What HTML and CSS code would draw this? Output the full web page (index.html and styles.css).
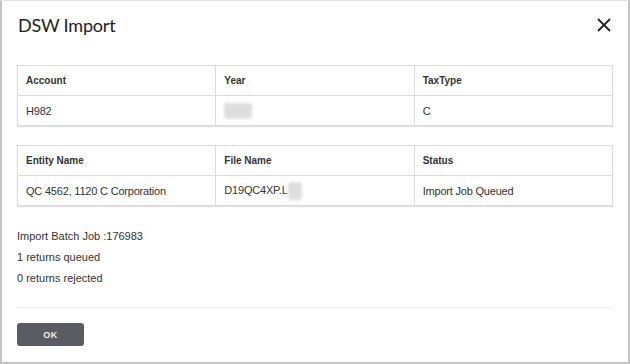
FILE: index.html
```html
<!DOCTYPE html>
<html lang="en">
<head>
    <meta charset="UTF-8">
    <title>DSW Import</title>
    <link rel="stylesheet" href="styles.css">
</head>
<body>

<div class="dialog">
    <div class="dialog-header">
        <h1>DSW Import</h1>
        <button class="close-button" aria-label="Close">
            <svg width="14" height="14" viewBox="0 0 14 14">
                <path d="M1 1 L13 13 M13 1 L1 13" stroke="#222" stroke-width="1.8" fill="none"/>
            </svg>
        </button>
    </div>

    <div class="dialog-body">
        <table class="grid">
            <tr>
                <th>Account</th>
                <th>Year</th>
                <th>TaxType</th>
            </tr>
            <tr>
                <td>H982</td>
                <td><span class="blur year"></span></td>
                <td>C</td>
            </tr>
        </table>

        <table class="grid">
            <tr>
                <th>Entity Name</th>
                <th>File Name</th>
                <th>Status</th>
            </tr>
            <tr>
                <td>QC 4562, 1120 C Corporation</td>
                <td>D19QC4XP.L<span class="blur ext"></span></td>
                <td>Import Job Queued</td>
            </tr>
        </table>

        <div class="summary">
            <p>Import Batch Job :176983</p>
            <p>1 returns queued</p>
            <p>0 returns rejected</p>
        </div>
    </div>

    <div class="dialog-footer">
        <button class="ok-button">OK</button>
    </div>
</div>

</body>
</html>
```

FILE: styles.css
```css
body {
    margin: 0;
    font-family: "Liberation Sans", Arial, sans-serif;
    background: #fff;
}
.dialog {
    box-sizing: border-box;
    width: 630px;
    height: 364px;
    border: 2px solid #c4c4c4;
    border-top: 1px solid #e4e4e4;
    background: #fff;
    padding: 0 15px;
}
.dialog-header {
    display: flex;
    justify-content: space-between;
    align-items: center;
    height: 48px;
    padding-left: 1px;
}
.dialog-header h1 {
    margin: 0;
    font-family: Lato, sans-serif;
    font-weight: normal;
    font-size: 18px;
    color: #222;
    letter-spacing: -0.2px;
}
.close-button {
    background: none;
    border: none;
    padding: 0;
    margin-right: 2px;
    width: 14px;
    height: 14px;
    cursor: pointer;
}
.dialog-body {
    padding-top: 16px;
}
.grid {
    width: 596px;
    border-collapse: collapse;
    table-layout: fixed;
    margin-bottom: 19px;
    border: 1px solid #dcdcdc;
    box-shadow: 0 1px 1px rgba(0, 0, 0, 0.12);
}
.grid th, .grid td {
    border: 1px solid #dcdcdc;
    height: 29px;
    padding: 0 8px;
    text-align: left;
    color: #333;
}
.grid th {
    font-size: 10px;
    font-weight: bold;
}
.grid td {
    font-size: 11px;
    letter-spacing: -0.2px;
}
.blur {
    display: inline-block;
    vertical-align: middle;
    background: #dedede;
    border-radius: 3px;
    filter: blur(1.5px);
}
.year {
    width: 28px;
    height: 16px;
}
.ext {
    width: 14px;
    height: 18px;
}
.summary {
    padding-top: 1px;
    padding-bottom: 18px;
    border-bottom: 1px solid #ececec;
    width: 596px;
}
.summary p {
    margin: 0;
    font-size: 11px;
    line-height: 21px;
    color: #333;
}
.dialog-footer {
    padding-top: 15px;
}
.ok-button {
    width: 67px;
    height: 23px;
    background: #5b5b63;
    color: #eee;
    border: none;
    border-radius: 3px;
    font-family: "Liberation Sans", Arial, sans-serif;
    font-size: 9px;
    font-weight: bold;
    letter-spacing: 0.5px;
    cursor: pointer;
}
```
